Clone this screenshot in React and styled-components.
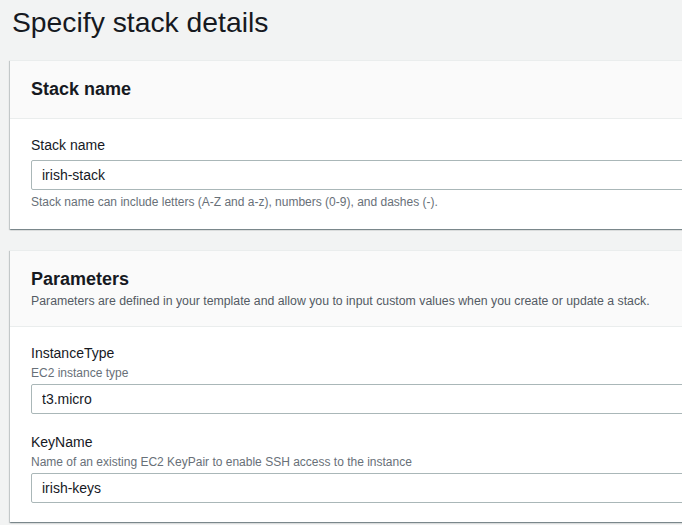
import React from 'react';
import styled, { createGlobalStyle } from 'styled-components';

const GlobalStyle = createGlobalStyle`
  html, body {
    margin: 0;
    padding: 0;
    background: #f2f3f3;
    overflow: hidden;
  }
  body {
    font-family: "Liberation Sans", Arial, sans-serif;
    color: #16191f;
  }
`;

const Page = styled.div`
  width: 682px;
  height: 525px;
  overflow: hidden;
  padding: 0 0 0 10px;
  box-sizing: border-box;
`;

const Title = styled.h1`
  margin: 0 0 16px 2px;
  font-size: 28.3px;
  font-weight: 400;
  line-height: 44px;
  color: #16191f;
`;

const Card = styled.section`
  width: 720px;
  background: #ffffff;
  box-shadow: 0 1px 1px 0 rgba(0, 28, 36, 0.3), 1px 1px 1px 0 rgba(0, 28, 36, 0.15),
    -1px 1px 1px 0 rgba(0, 28, 36, 0.15);
  border-top: 1px solid #eaeded;
  margin-bottom: 21px;
`;

const CardHeader = styled.div`
  background: #fafafa;
  border-bottom: 1px solid #eaeded;
  padding: 18px 20px ${(p) => (p.$withText ? '17px' : '19px')} 21px;
`;

const CardTitle = styled.h2`
  margin: 0;
  font-size: 18px;
  font-weight: 700;
  line-height: 20px;
`;

const CardDescription = styled.p`
  margin: 4px 0 0;
  font-size: 12.3px;
  line-height: 16px;
  color: #545b64;
`;

const CardBody = styled.div`
  padding: 15px 20px 19px 21px;
  display: flex;
  flex-direction: column;
  gap: 17px;
`;

const Field = styled.div`
  display: flex;
  flex-direction: column;
`;

const Label = styled.label`
  font-size: 14px;
  line-height: 22px;
  color: #16191f;
`;

const Description = styled.span`
  margin-top: 1px;
  font-size: 12px;
  line-height: 16px;
  color: #687078;
`;

const Input = styled.input`
  margin-top: ${(p) => (p.$afterDescription ? '3px' : '4px')};
  height: 30px;
  box-sizing: border-box;
  border: 1px solid #aab7b8;
  border-radius: 2px;
  padding: 0 10px;
  font-family: "Liberation Sans", Arial, sans-serif;
  font-size: 14px;
  color: #16191f;
  background: #ffffff;
  outline: none;
`;

const Hint = styled.span`
  margin-top: 4px;
  font-size: 12px;
  line-height: 16px;
  color: #687078;
`;

function FormField({ label, description, value, hint }) {
  return (
    <Field>
      <Label>{label}</Label>
      {description && <Description>{description}</Description>}
      <Input defaultValue={value} readOnly $afterDescription={!!description} />
      {hint && <Hint>{hint}</Hint>}
    </Field>
  );
}

export default function App() {
  return (
    <>
      <GlobalStyle />
      <Page>
        <Title>Specify stack details</Title>
        <Card>
          <CardHeader>
            <CardTitle>Stack name</CardTitle>
          </CardHeader>
          <CardBody>
            <FormField
              label="Stack name"
              value="irish-stack"
              hint="Stack name can include letters (A-Z and a-z), numbers (0-9), and dashes (-)."
            />
          </CardBody>
        </Card>
        <Card>
          <CardHeader $withText>
            <CardTitle>Parameters</CardTitle>
            <CardDescription>
              Parameters are defined in your template and allow you to input custom values when you
              create or update a stack.
            </CardDescription>
          </CardHeader>
          <CardBody>
            <FormField label="InstanceType" description="EC2 instance type" value="t3.micro" />
            <FormField
              label="KeyName"
              description="Name of an existing EC2 KeyPair to enable SSH access to the instance"
              value="irish-keys"
            />
          </CardBody>
        </Card>
      </Page>
    </>
  );
}
